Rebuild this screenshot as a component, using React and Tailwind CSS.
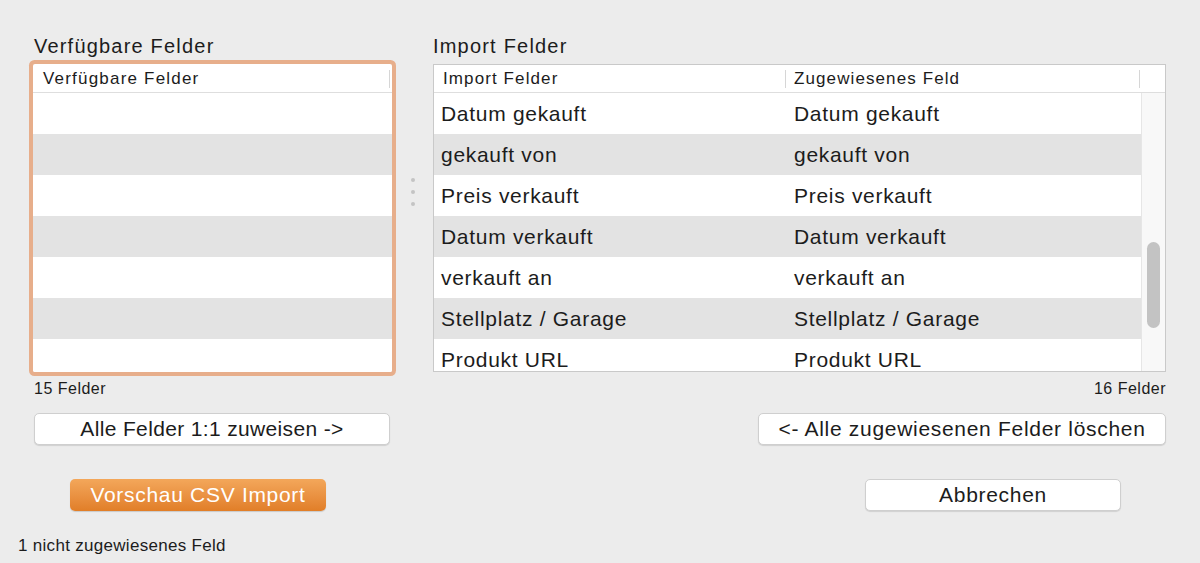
import React from "react";

const font = { fontFamily: '"Liberation Sans", Arial, sans-serif' };

const importRows = [
  ["Datum gekauft", "Datum gekauft"],
  ["gekauft von", "gekauft von"],
  ["Preis verkauft", "Preis verkauft"],
  ["Datum verkauft", "Datum verkauft"],
  ["verkauft an", "verkauft an"],
  ["Stellplatz / Garage", "Stellplatz / Garage"],
  ["Produkt URL", "Produkt URL"],
];

function HeaderTick() {
  return <span className="w-px h-[18px] bg-[#d6d6d6] shrink-0" />;
}

function AvailableList() {
  return (
    <div className="h-[308px] bg-white rounded-[2px] ring-4 ring-[#e7ae8b] flex flex-col overflow-hidden">
      <div className="h-[29px] shrink-0 flex items-center border-b border-[#dedede] pl-[10px] pr-[2px] pt-[2px]">
        <span className="flex-1 text-[17px] tracking-[1.2px] text-[#1c1c1c]">Verfügbare Felder</span>
        <HeaderTick />
      </div>
      <div className="flex-1 flex flex-col overflow-hidden">
        {[0, 1, 2, 3, 4, 5, 6].map((i) => (
          <div key={i} className={`h-[41px] shrink-0 ${i % 2 === 1 ? "bg-[#e3e3e3]" : "bg-white"}`} />
        ))}
      </div>
    </div>
  );
}

function ImportList() {
  return (
    <div className="h-[308px] bg-white border border-[#c9c9c9] flex flex-col overflow-hidden">
      <div className="h-[28px] shrink-0 flex items-center border-b border-[#dedede] pt-[1px]">
        <div className="w-[352px] flex items-center pl-[9px]">
          <span className="flex-1 text-[17px] tracking-[1.1px] text-[#1c1c1c]">Import Felder</span>
          <HeaderTick />
        </div>
        <div className="w-[354px] flex items-center pl-[8px]">
          <span className="flex-1 text-[17px] tracking-[1.1px] text-[#1c1c1c]">Zugewiesenes Feld</span>
          <HeaderTick />
        </div>
      </div>
      <div className="flex-1 flex overflow-hidden">
        <div className="w-[707px] flex flex-col">
          {importRows.map(([a, b], i) => (
            <div
              key={a}
              className={`h-[41px] shrink-0 flex items-center text-[21px] tracking-[0.7px] text-[#1c1c1c] ${
                i % 2 === 1 ? "bg-[#e3e3e3]" : "bg-white"
              }`}
            >
              <span className="w-[352px] pl-[7px]">{a}</span>
              <span className="pl-[8px]">{b}</span>
            </div>
          ))}
        </div>
        <div className="flex-1 bg-[#f8f8f8] border-l border-[#e6e6e6] pl-[5px] pt-[149px]">
          <div className="w-[13px] h-[86px] rounded-full bg-[#c3c3c3]" />
        </div>
      </div>
    </div>
  );
}

function MacButton({ children, className = "" }) {
  return (
    <button
      className={`h-[32px] bg-white rounded-[5px] border border-[#cfcfcf] shadow-[0_1px_1px_rgba(0,0,0,0.12)] text-[21px] text-[#1c1c1c] flex items-center justify-center ${className}`}
    >
      {children}
    </button>
  );
}

export default function App() {
  return (
    <div className="w-[1200px] h-[563px] bg-[#ececec] overflow-hidden" style={font}>
      <div className="flex pt-[35px] pl-[33px]">
        {/* left column */}
        <div className="w-[359px] flex flex-col">
          <div className="h-[22px] leading-[22px] text-[20px] tracking-[1.2px] text-[#1c1c1c] pl-px">
            Verfügbare Felder
          </div>
          <div className="mt-[7px]">
            <AvailableList />
          </div>
          <div className="mt-[7px] h-[20px] leading-[20px] text-[16px] tracking-[0.5px] text-[#1c1c1c] pl-px">
            15 Felder
          </div>
          <MacButton className="mt-[14px] ml-px w-[356px] tracking-[0.35px]">Alle Felder 1:1 zuweisen -&gt;</MacButton>
          <button className="mt-[34px] ml-[37px] w-[256px] h-[32px] rounded-[5px] bg-gradient-to-b from-[#f3a75a] to-[#e17e27] shadow-[0_1px_1px_rgba(0,0,0,0.15)] text-white text-[21px] tracking-[0.7px] flex items-center justify-center">
            Vorschau CSV Import
          </button>
        </div>

        {/* splitter */}
        <div className="w-[41px] flex flex-col items-center gap-[8px] pt-[143px]">
          <span className="w-[4px] h-[4px] rounded-full bg-[#c4c4c4]" />
          <span className="w-[4px] h-[4px] rounded-full bg-[#c4c4c4]" />
          <span className="w-[4px] h-[4px] rounded-full bg-[#c4c4c4]" />
        </div>

        {/* right column */}
        <div className="w-[733px] flex flex-col">
          <div className="h-[22px] leading-[22px] text-[20px] tracking-[1.2px] text-[#1c1c1c]">Import Felder</div>
          <div className="mt-[7px]">
            <ImportList />
          </div>
          <div className="mt-[7px] h-[20px] leading-[20px] text-[16px] tracking-[0.5px] text-[#1c1c1c] text-right">
            16 Felder
          </div>
          <MacButton className="mt-[14px] self-end w-[408px] tracking-[0.7px]">
            &lt;- Alle zugewiesenen Felder löschen
          </MacButton>
          <MacButton className="mt-[34px] self-end mr-[45px] w-[256px] tracking-[0.7px]">Abbrechen</MacButton>
        </div>
      </div>
      <div className="mt-[25px] pl-[18px] h-[20px] leading-[20px] text-[17px] tracking-[0.3px] text-[#1c1c1c]">
        1 nicht zugewiesenes Feld
      </div>
    </div>
  );
}
